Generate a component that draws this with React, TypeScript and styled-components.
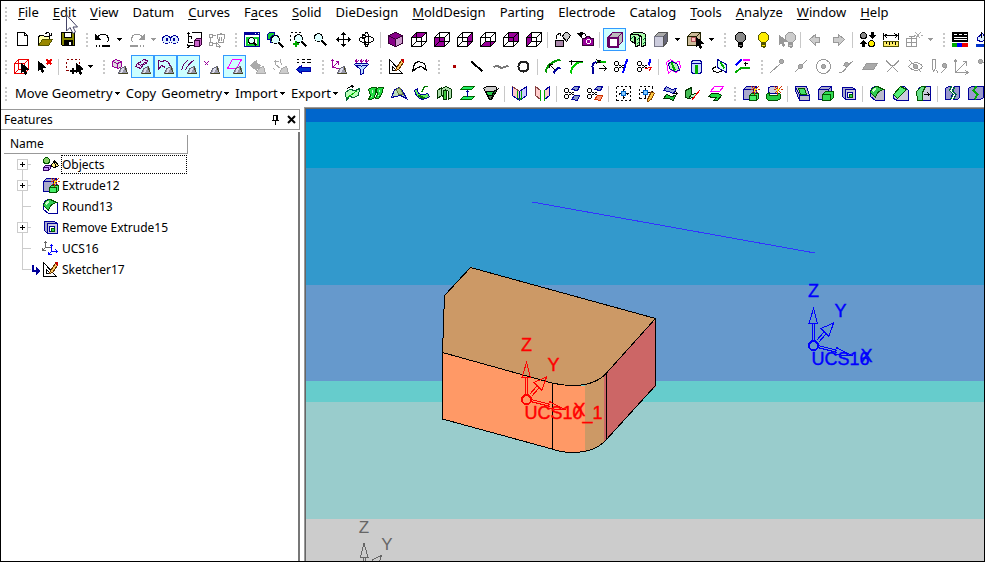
import React from 'react';
import styled, { createGlobalStyle } from 'styled-components';

const K = '#000';
const PU = '#909';
const GN = '#1c3';
const DG = '#063';
const NV = '#009';
const GY = '#999';
const BL = '#00f';
const RD = '#e00';
const MG = '#f0f';

/* [path, stroke, fill, stroke width] */
type Stroke = [string, string?, string?, number?];

const disc = (x: number, y: number, r: number) =>
  `M${x - r} ${y}a${r} ${r} 0 1 0 ${2 * r} 0a${r} ${r} 0 1 0 ${-2 * r} 0Z`;

const lens = (x: number, y: number): Stroke[] => [
  [disc(x, y, 4), K, '#dff'],
  [`M${x + 3} ${y + 3}l5 5`, K, 'none', 2],
];
const dome: Stroke[] = [
  ['M7 15Q8 9 14 8L16 15Z', '#667', '#99a'],
  ['M9 14Q9 10 13 9L11 14Z', 'none', '#dde'],
  ['M7 15H16M14 9L15 14', '#442'],
];
const greyDome: Stroke[] = [['M7 15Q8 9 14 8L16 15Z', '#aaa', '#ccc']];
const cursor = (x: number, y: number, c = K): Stroke => [
  `M${x} ${y}v9l2 -2l2 4l1 -1l-1 -4h3Z`,
  c,
  c,
];
const wire: Stroke[] = [
  ['M1 6H11V15H1ZM6 1H16V10H6ZM1 6L6 1M11 6L16 1M11 15L16 10M1 15L6 10', K],
];
const cubeFace = (d: string): Stroke[] => [[d, PU, PU], ...wire];
const bulb = (x: number, c: string, o: string): Stroke[] => [
  [`M${x} 1h4l3 3v4l-3 3h-4l-3 -3v-4Z`, o, c],
  [`M${x} 12h4v3h-4ZM${x} 13h4M${x + 1} 16h2`, o, c],
];
const scissors: Stroke[] = [
  [disc(3, 5, 2), K],
  [disc(3, 11, 2), K],
  ['M5 6L11 10M5 10L11 6', K, 'none', 1],
];
const block: Stroke[] = [
  ['M1 4L4 1H14V11L11 14H1Z', NV, '#aac'],
  ['M1 4H11V14M11 4L14 1', NV],
];
const spark: Stroke[] = [
  ['M9 1L16 8M16 1L9 8M12 0V3M12 6V9M8 4H10M15 4H17', '#c30'],
  ['M11 4H14M12 3V6', '#fe0', 'none', 1],
];
const arrows4: Stroke = ['M8 1V15M1 8H15', K];

const icons: Record<string, Stroke[]> = {
  new: [['M4 1H11L14 4V14H4ZM11 1V4H14', K, '#fff']],
  open: [
    ['M2 13V5L4 4H7L8 5H13V8', K, '#ffa'],
    ['M2 14L6 8H16L12 14Z', '#550', '#980'],
    ['M9 3L10 1H12L14 4M15 1V4H12', K],
  ],
  save: [
    ['M2 1H15V14H3L2 13Z', K, '#880'],
    ['M5 1H12V6H5Z', K, '#fff'],
    ['M5 9H13V14H5Z', K, K],
    ['M10 11H11V13H10Z', '#fff', '#fff'],
  ],
  undo: [
    ['M3 6C6 1 14 1 14 9L12 11', K],
    ['M1 3V8H6Z', K, K],
    ['M1 14H2M4 14H5M7 14H15', K, 'none', 2],
  ],
  redo: [
    ['M14 6C11 1 3 1 3 9L5 11', GY],
    ['M16 3V8H11Z', GY, GY],
    ['M1 14H9M11 14H12M14 14H15', GY, 'none', 2],
  ],
  glasses: [
    [disc(4, 8, 4), NV, '#def'],
    [disc(12, 8, 4), NV, '#def'],
    ['M4 7H5V9H4ZM11 7H12V9H11Z', NV, '#07c'],
  ],
  relate: [
    ['M6 1H16V10M3 5V11H7', K],
    ['M1 3L3 1L5 3M3 1V5H6M6 5V7', K],
    ['M2 13L4 15L2 16M1 14H8', K],
    ['M9 9L11 7H16V13L14 15H9Z', '#303', '#c6c'],
    ['M9 9H14V15', '#303'],
  ],
  clean: [
    ['M1 3H4V6H1ZM1 11H4V14H1ZM2 6V11M4 4H7M4 12H9M8 10V15H11M10 13L12 15L10 17', GY],
    ['M8 3H16M9 4L10 11H15L16 4M11 2H13M11 5V9M13 5V9', GY],
  ],
  fit: [
    ['M1 1H16V15H1Z', NV, '#fff'],
    ['M1 2H16', NV, 'none', 3],
    ['M11 2H12M14 2H15', '#fff'],
    ['M3 6H14V13H3Z', GN, 'none', 2],
    [disc(8, 9, 3), K, '#dff'],
    ['M10 11L13 14', K, 'none', 2],
  ],
  zoomPart: [
    ['M1 3L3 1H8V6L6 8H1Z', NV, GN],
    ['M4 6L6 4H11V9L9 11H4Z', NV, '#6d6'],
    ...lens(9, 8),
  ],
  zoomBox: [
    ['M1 1H3M5 1H7M9 1H11M1 3V5M1 7V9M11 3V4', K],
    ...lens(9, 7),
    ['M6 9V15M3 12H9', '#0a0', 'none', 2],
  ],
  zoom: lens(6, 6),
  pan: [arrows4, ['M6 3L8 1L10 3ZM6 13L8 15L10 13ZM3 6L1 8L3 10ZM13 6L15 8L13 10Z', K, K]],
  rotate: [
    ['M1 8C1 4 15 4 15 8C15 12 1 12 1 8ZM8 1C5 1 5 15 8 15C11 15 11 1 8 1Z', K],
    ['M4 3L8 5L4 7ZM10 12L7 10V14Z', K, '#fff'],
  ],
  cube: [
    ['M1 4L8 1L15 4V12L8 15L1 12Z', '#303', '#808'],
    ['M8 8L15 4V12L8 15Z', '#303', '#c9c'],
    ['M1 4L8 8V15', '#303'],
  ],
  vTop: cubeFace('M1 6L6 1H16L11 6Z'),
  vFront: cubeFace('M1 6H11V15H1Z'),
  vRight: cubeFace('M11 6L16 1V10L11 15Z'),
  vBottom: cubeFace('M1 15L6 10H16L11 15Z'),
  vBack: cubeFace('M6 1H16V10H6Z'),
  vLeft: cubeFace('M1 6L6 1V10L1 15Z'),
  swap: [
    ['M1 9H9V15H1Z', K, '#a8a'],
    ['M9 3L11 1H13L16 4L12 10L8 5Z', K, '#ccc'],
    ['M2 7V4L5 2M3 2H6V4', K],
  ],
  camera: [
    ['M5 7H8L9 5H12L13 7H16V14H5Z', '#303', PU],
    [disc(11, 10, 2), '#fff', PU],
    ['M2 3C6 0 9 3 8 5', K],
    ['M0 2L5 1L4 6Z', K, K],
  ],
  shaded: [
    ['M1 6L6 1H16V10L11 15H1Z', '#606', '#bbb', 1],
    ['M2 6H11V15H2Z', '#606', '#fff', 2],
    ['M11 6L16 1M6 1H16V10L11 15M2 6L6 1', '#606', 'none', 1],
  ],
  section: [
    ['M1 3L4 1H13L16 3V14L12 15V5L10 4V14L6 15V6L5 5V12L1 9Z', K, '#afa'],
    ['M1 3H8L12 5M6 1H13L16 3', K, '#ccc'],
    ['M7 9L10 6M7 13L10 10M13 9L16 6M13 13L16 10M1 8L4 5', DG],
  ],
  solid: [
    ['M2 5L6 1H15V10L11 15H2Z', '#555', '#aaa'],
    ['M2 5H11V15H2Z', '#778', '#ccd'],
    ['M11 5L15 1V10L11 15Z', '#555', '#667'],
  ],
  pickBody: [
    ['M1 5L5 1H14V10L10 14H1Z', '#220', '#cb9'],
    ['M1 5H10V14M10 5L14 1', '#220'],
    ['M5 10H9V6H5Z', '#a55', '#fbb'],
    cursor(10, 6),
  ],
  bulbOff: bulb(6, '#888', K),
  bulbOn: bulb(6, '#fe0', '#550'),
  bulbPick: [...bulb(10, '#ccc', GY), cursor(1, 4, GY)],
  prev: [['M2 8L8 3V6H12V11H8V14Z', '#999', '#ccc']],
  next: [['M14 8L8 3V6H3V11H8V14Z', '#999', '#ccc']],
  exchange: [
    [disc(4, 4, 3), K, '#888'],
    [disc(12, 12, 3), K, '#fe0'],
    ['M10 4H12V1H14V4H16L13 7Z', K, K],
    ['M1 12L4 9L7 12H5V15H3V12Z', K, K],
  ],
  measure: [
    ['M1 1V8M16 1V8M2 4H15M5 2L2 4L5 7M12 2L15 4L12 7', K],
    ['M1 10H16V15H1Z', '#550', '#fe6'],
    ['M4 10V12M7 10V13M10 10V12M13 10V13', K],
  ],
  align: [
    ['M1 7H11V15H1ZM1 11H11M6 4V15M3 5H9', GY],
    ['M10 1L15 7M15 1L10 7M8 4H10M15 4H17', '#aaa'],
  ],
  layers: [
    ['M1 1H16V10H1Z', K, K],
    ['M2 3H5M7 3H10M12 3H15M2 6H15M2 8H15', '#fff'],
    ['M1 12H5V15H1Z', '#0a0', '#0a0'],
    ['M6 12H10V15H6Z', BL, BL],
    ['M11 12H16V15H11Z', RD, RD],
  ],
  paint: [
    ['M3 6L8 2L12 8L7 10L3 9Z', NV, '#def'],
    ['M7 0V6', K],
    ['M1 14H16', '#03c', 'none', 3],
  ],

  pickCube: [
    ['M1 5H11V15H1ZM5 1H15V11H5ZM1 5L5 1M11 5L15 1M11 15L15 11M1 15L5 11', RD],
    cursor(8, 5),
  ],
  deselect: [cursor(2, 3), ['M10 1L15 6M15 1L10 6', RD, 'none', 2]],
  boxSelect: [
    ['M1 1H3M5 1H7M9 1H11M13 1H14M1 3V5M1 7V9M1 11V12H3M14 3V5', '#800', 'none', 1],
    ['M7 9V15M4 12H10', K, 'none', 2],
    cursor(11, 5),
  ],
  fBody: [['M1 3L4 1L10 3V8L7 10L1 8ZM1 3L6 5V10M6 5L10 3', PU, '#ddd'], ...dome],
  fFace: [['M1 8L3 5L7 3L9 1L13 2L12 5L9 6L6 10L4 9ZM3 5L6 7L12 3', '#606', '#edf'], ...dome],
  fEdge: [['M1 11V2L4 3L8 2L11 4L13 8M1 11L4 7L8 9', '#606'], ...dome],
  fCurve: [['M1 12C2 7 4 4 8 1M5 12C6 8 9 5 14 1', '#606'], ...dome],
  fPoint: [['M1 3L5 7M5 3L1 7', PU], ...dome],
  fPlane: [['M1 10L6 1H15L10 10Z', MG], ...dome],
  fOff: [['M1 7L7 2V5L11 7L9 10L7 9V12Z', '#aaa', '#aaa'], ...greyDome],
  fWire: [['M1 3H6M3 1V6L8 10M3 12L1 10M8 1L9 7', '#aaa'], ...greyDome],
  filterAll: [
    ['M1 1H3M6 1H9M11 1H15M1 4H3M6 4H9M11 4H15', K, 'none', 1],
    ['M1 11L6 7V9H15V13H6V15Z', '#00a', '#03c'],
  ],
  fUcs: [['M2 1V9L9 10M0 3L2 1L4 3M2 9L8 3M5 3H8V6', PU], ...dome],
  funnel: [
    ['M1 6C1 4 15 4 15 6L10 11V15L7 16V11Z', NV, '#bdf'],
    ['M1 6C3 8 13 8 15 6', NV],
    ['M3 0V4M8 0V4M13 0V4M2 2L3 4L5 2M7 2L8 4L10 2M12 2L13 4L15 2', PU],
  ],
  sketch: [
    ['M1 1V15H14ZM4 8V12H8Z', K],
    ['M8 9L13 2L15 4L10 11L7 12Z', '#630', '#fc6'],
    ['M13 1L15 1V4Z', '#c00', '#c00'],
  ],
  profile: [['M1 13L3 5L7 3L13 5L15 12L10 8L6 9Z', K]],
  point: [['M7 7H9V9H7Z', '#a00', '#a00']],
  line: [['M2 3L13 13', K, 'none', 2]],
  spline: [['M1 9C3 7 5 7 8 9C11 10 13 8 16 7', '#777', 'none', 2]],
  circle: [[disc(8, 8, 5), '#222', 'none', 2]],
  offset: [
    ['M1 14C2 7 7 3 16 1', '#090', 'none', 2],
    ['M9 15C10 12 12 10 16 9', NV, 'none', 2],
    ['M5 6L11 12M5 9V6H8', K],
  ],
  trimC: [
    ['M3 15C4 8 8 4 15 3', '#0c0', 'none', 2],
    ['M1 3H15M4 1V6', K],
  ],
  fillet: [
    ['M2 15V8C2 6 4 4 6 3', NV, 'none', 2],
    ['M6 3H15', '#0b0', 'none', 2],
    ['M6 1L11 5M11 1L6 5M8 10H16M13 7L16 10L13 13', K],
  ],
  cut: [...scissors, ['M9 14C12 12 10 6 14 1', BL, 'none', 2]],
  cutRed: [...scissors, ['M12 7L14 1', BL, 'none', 2], ['M9 10L15 9L12 13', RD]],
  project: [
    ['M1 4L5 1L9 4L14 3L15 9L11 14L6 12L3 15Z', MG],
    ['M3 5L7 3L12 6L14 12L9 13L4 10Z', NV, '#beb'],
    ['M6 4C8 7 7 10 10 12', '#0a0', 'none', 2],
  ],
  cylinder: [
    ['M3 4C3 1 13 1 13 4V13C13 16 3 16 3 13Z', NV, '#cdf'],
    ['M3 4C3 6 13 6 13 4', NV],
    ['M8 6V15', '#0a0', 'none', 3],
  ],
  wrap: [
    ['M6 1L15 6V14L6 9Z', NV, '#dfe'],
    ['M9 4L13 10', '#0a0', 'none', 2],
    ['M5 8L1 10C1 14 7 15 11 12', K],
  ],
  steps: [
    ['M1 7L7 1', BL, 'none', 2],
    ['M8 1H15', MG, 'none', 2],
    ['M1 14L7 9H15', '#0a0', 'none', 2],
    ['M11 3V7M9 5H13', K],
  ],
  sLine: [['M1 14L11 5', GY], [disc(12, 3, 2), GY, '#aaa']],
  sMid: [['M2 14L14 2', GY], [disc(8, 8, 2), GY, '#aaa']],
  sCenter: [[disc(8, 8, 7), GY], [disc(8, 8, 2), GY, '#aaa']],
  sTan: [['M1 14C8 15 7 5 15 3M5 7L12 5', GY], [disc(8, 6, 2), GY, '#aaa']],
  sPlane: [['M1 11L5 5H16L12 11Z', GY, '#aaa']],
  sCross: [['M2 2L14 14M14 2L2 14M2 3C8 9 8 9 14 3', GY]],
  sHidden: [['M1 8C5 3 12 3 15 8C12 13 5 13 1 8ZM2 2L14 14', GY], [disc(8, 8, 2), GY, '#aaa']],
  sPen: [['M2 1H5V10L3 13L2 10ZM6 12L8 15M10 15L16 9', GY], [disc(14, 7, 2), GY, '#aaa']],
  sAngle: [['M2 1V14H15M2 14L13 3M0 4L2 1L4 4M12 12L15 14L12 16M9 3H13V7', GY]],
  sEnd: [['M4 4H14V14', GY], [disc(4, 3, 2), GY, '#aaa']],

  ruled: [
    ['M1 7L5 4L11 5L15 3L14 10L9 12L5 11L2 15Z', '#063', '#bfb'],
    ['M3 12L13 5', '#0b0', 'none', 1],
    ['M3 3L6 1H9M7 0L9 1L7 3', K],
  ],
  drive: [
    ['M1 4L4 2H9L7 12L4 14H1L3 10ZM8 4L11 2H16L14 9L11 13H8L10 8Z', '#050', '#2d4'],
    ['M4 4H6L4 11ZM11 4L13 4L11 10Z', 'none', '#cfc'],
  ],
  blend: [
    ['M1 12L4 4L9 2L13 7L16 13L10 10L5 11Z', NV, '#bdb'],
    ['M6 4L9 2L13 9L8 9Z', '#674', '#ac8'],
  ],
  sweep: [
    ['M1 5L4 3C4 9 8 11 14 8L16 11C10 16 3 14 1 5Z', NV, '#6e6'],
    ['M5 10L11 13', '#070', 'none', 2],
    ['M8 7L11 1H14', '#070'],
  ],
  sheets: [
    ['M1 5L5 2V10L1 13ZM5 3L10 1L15 4V12L12 14V6L9 4V12L5 10', '#030', '#ada'],
    ['M7 5H10V14H7Z', '#030', '#4c4'],
  ],
  offsetS: [
    ['M1 4L4 1H15L12 4Z', '#060', '#2e6'],
    ['M1 14L4 11H15L12 14Z', '#060', '#2e6'],
    ['M8 5V11M6 7L8 5L10 7', NV],
  ],
  bowl: [
    ['M1 3L4 1H13L15 4L13 6H3Z', K, '#ccc'],
    ['M3 6H13L11 10H5Z', K, '#2c4'],
    ['M5 10H11L9 14H7Z', K, '#575'],
    ['M11 6L15 4L9 14Z', K, '#283'],
  ],
  mirrorA: [
    ['M1 1L8 6V15L1 10Z', '#844', '#fcc'],
    ['M15 1L8 6V15L15 10Z', NV, '#ccf'],
    ['M6 5V13L8 14L10 13V5', '#0a0', 'none', 1],
    ['M1 1V10L8 15', NV],
  ],
  mirrorB: [
    ['M1 1L6 5V14L1 10Z', '#844', '#fcc'],
    ['M15 1L10 5V14L15 10Z', NV, '#fcc'],
    ['M6 4V15M10 4V15', '#0a0', 'none', 1],
  ],
  cutS: [...scissors, ['M8 4L11 1H16L14 5ZM8 14L11 10H16L14 15Z', NV, '#89c']],
  cutSR: [...scissors, ['M8 4L11 1H16L14 5Z', NV, '#89c'], ['M8 14L11 10H16L14 15Z', '#c30', '#f97']],
  extend: [
    ['M1 1H3M5 1H7M9 1H11M13 1H15V3M15 5V7M15 9V11M15 13V15H13M11 15H9M7 15H5M3 15H1V13M1 11V9M1 7V5M1 3V1', K],
    ['M8 3V13M3 8H13M7 4H9M7 12H9M4 7V9M12 7V9', K],
    ['M6 6H10V10H6Z', '#06c', '#8cf'],
  ],
  extendE: [
    ['M1 1H3M5 1H7M9 1H11M13 1H14V3M14 5V7M1 13V11M1 9V7M1 5V3M1 13H3M5 13H7', K],
    ['M7 2V12M2 7H12', K],
    ['M5 5H9V9H5Z', '#06c', '#8cf'],
    ['M9 14L13 6L16 8L12 15L9 16Z', '#840', '#fc4'],
  ],
  flip: [
    ['M2 5L5 1L10 4L15 3L12 8L7 6Z', NV, '#9ad'],
    ['M2 13L5 9L10 11L14 10L12 15L7 13Z', '#030', '#2c4'],
    ['M11 8H16M14 6L16 8L14 10', K],
  ],
  hinge: [
    ['M1 5L7 2V10L4 13L1 12Z', '#030', '#4b5'],
    ['M4 13L7 9L13 8L9 12Z', '#030', '#bfc'],
    ['M7 15L15 5', '#e00', 'none', 1],
  ],
  replace: [
    ['M3 6L7 1H16L12 6Z', MG, '#fff'],
    ['M1 11L4 8H11L14 10L10 15H6L9 12L5 12Z', '#030', '#2d4'],
  ],
  extrude: [...block, ['M7 10L9 8H16V13L14 15H7Z', '#050', '#4e6'], ['M7 10H14V15', '#050'], ...spark],
  revolve: [
    ['M3 2L6 1H12V8H3Z', NV, '#ccd'],
    ['M1 9L4 7V10H12V7L15 9V13L12 15H3L1 13Z', '#050', '#2c4'],
    ...spark,
  ],
  shellOp: [
    ['M1 1H12L15 10V15H5L1 5Z', NV, '#bbc'],
    ['M4 3H10L12 9H6Z', '#050', '#4d6'],
    ['M5 10H15M1 1L5 10V15', NV],
  ],
  addExt: [...block, ['M5 9L8 6H16V12L13 15H5Z', '#050', '#3d5'], ['M5 9H13V15', '#050']],
  remExt: [
    ['M2 2H12L15 4V14H5L2 11Z', NV, '#aac'],
    ['M5 4H15V14H5Z', NV, '#ccd'],
    ['M7 7H12V12H7Z', NV, '#fff'],
    ['M9 9H12V12H9Z', '#050', '#3d5'],
  ],
  round: [
    ['M1 7C1 3 4 1 8 1L15 5V15H6L1 11Z', NV, '#bbc'],
    ['M1 7C2 3 5 1 8 1L14 4C9 5 7 7 6 12Z', '#050', '#3c5'],
    ['M3 6L6 3', '#cfc', 'none', 2],
  ],
  roundW: [
    ['M1 7C1 3 4 1 8 1L15 5V15H6L1 11Z', NV, '#fff'],
    ['M1 7C2 3 5 1 8 1L14 4C9 5 7 7 6 12Z', '#050', '#3c5'],
    ['M3 6L6 3', '#cfc', 'none', 2],
  ],
  chamfer: [
    ['M1 9L8 1H12L16 5V15H5L1 13Z', NV, '#ccd'],
    ['M1 9L8 1L14 4L5 13Z', '#050', '#5e7'],
  ],
  draft: [
    ['M3 3L6 1H15V15H4Z', NV, '#ccd'],
    ['M1 6L6 1H10L7 7V15H2Z', '#050', '#6d8'],
    ['M8 9H14M12 7L14 9L12 11', K],
  ],
  splitA: [
    ['M1 3L4 1H7L5 5L8 8L6 14H1Z', NV, '#99c'],
    ['M10 1H15V12L13 14H9L11 9L8 5Z', NV, '#99c'],
    ['M7 1L5 5L9 9L6 14M10 2L8 6L12 9L9 14', '#073'],
  ],
  splitB: [
    ['M1 3L4 1H16V12L13 14H1Z', NV, '#99c'],
    ['M9 1L6 5L10 9L7 14', '#0a0', 'none', 2],
  ],

  objects: [
    [disc(4, 4, 3), '#050', '#8c6'],
    ['M8 10L12 4L16 9L13 11Z', K, '#fe8'],
    ['M12 4L13 11', K],
    ['M1 11L3 9H8V12L6 14H1Z', '#306', '#c9f'],
    ['M1 11H6V14', '#306'],
  ],
  ucs: [
    ['M3 1V7H8M1 3L3 1L5 3M3 7L0 10M0 7V10H3', '#666'],
    ['M9 4V11H15M7 6L9 4L11 6M13 9L15 11L13 13M9 11L6 14M6 11V14H9', BL],
  ],
};

const Glyph = ({ name }: { name: string }) => (
  <svg width="18" height="18" viewBox="0 0 18 18" shapeRendering="crispEdges" aria-hidden="true">
    <g transform="translate(.5 .5)">
      {icons[name].map(([d, stroke = K, fill = 'none', w = 1], i) => (
        <path key={i} d={d} stroke={stroke} fill={fill} strokeWidth={w} />
      ))}
    </g>
  </svg>
);

const Global = createGlobalStyle`
  * { box-sizing: border-box; }
  html, body, #root { height: 100%; margin: 0; }
  body { font: 13px/18px "Noto Sans", "Open Sans", sans-serif; color: #000; overflow: hidden; }
  button { font: inherit; color: inherit; background: none; border: 0; padding: 0; margin: 0; }
  svg { display: block; flex: none; }
`;

const Frame = styled.div`
  position: relative;
  height: 100%;
  display: flex;
  flex-direction: column;
  border: 1px solid #000;
  background: #fff;
  overflow: hidden;
`;

const Bar = styled.div`
  display: flex;
  align-items: center;
  flex: none;
  height: 27px;
  overflow: hidden;
  white-space: nowrap;
`;

const MenuBar = styled(Bar)`
  height: 25px;
`;

const MenuList = styled.nav`
  display: flex;
  gap: 14px;
  padding: 0 0 3px 8px;
  u { text-underline-offset: 2px; }
`;

const Grip = styled.span`
  flex: none;
  width: 9px;
  height: 14px;
  padding-left: 4px;
  margin-left: 3px;
  background: repeating-linear-gradient(#c8c8c8 0 2px, #fff 2px 4px) content-box;
  border-right: 3px solid #fff;
  &:first-child { margin-left: 0; }
`;

const Rule = styled.span`
  flex: none;
  width: 1px;
  height: 16px;
  margin: 0 3px 0 2px;
  background: #c8c8c8;
`;

const ToolButton = styled.button<{ $on?: boolean }>`
  flex: none;
  display: grid;
  place-items: center;
  width: 23px;
  height: 23px;
  border: 1px solid ${(p) => (p.$on ? '#39f' : 'transparent')};
  background: ${(p) => (p.$on ? '#cff' : 'none')};
`;

const Drop = styled.button`
  flex: none;
  display: grid;
  place-items: center;
  width: 11px;
  height: 23px;
`;

const CommandGroup = styled.div`
  flex: none;
  display: flex;
  justify-content: space-between;
  width: 331px;
  padding: 0 2px 2px 5px;
`;

const Command = styled.button`
  display: flex;
  align-items: center;
  gap: 1px;
  svg { margin-top: 2px; }
`;

const Work = styled.div`
  flex: 1;
  min-height: 0;
  display: flex;
  gap: 4px;
`;

const Side = styled.aside`
  flex: none;
  width: 299px;
  padding-top: 2px;
  display: flex;
  flex-direction: column;
  font-size: 12px;
`;

const PanelTitle = styled.header`
  flex: none;
  display: flex;
  align-items: center;
  gap: 4px;
  height: 21px;
  padding: 0 2px 0 3px;
  border: 1px solid #999;
  border-left: 0;
  h2 { flex: 1; margin: 0; font: inherit; }
`;

const PanelButton = styled.button`
  display: grid;
  place-items: center;
  width: 12px;
  height: 14px;
`;

const PanelBody = styled.div`
  flex: 1;
  margin-top: 2px;
  padding: 3px 0 0 3px;
  border-right: 2px solid #777;
`;

const ColumnHead = styled.div`
  width: 184px;
  height: 19px;
  padding-left: 6px;
  border: solid #999;
  border-width: 0 1px 1px 0;
`;

const Tree = styled.ul`
  list-style: none;
  margin: 0;
  padding: 0 0 0 12px;
`;

const Node = styled.li`
  display: flex;
  align-items: center;
  height: 21px;
`;

const Label = styled.span<{ $focus?: boolean }>`
  width: 126px;
  height: 19px;
  line-height: 17px;
  margin-left: 1px;
  white-space: nowrap;
  border: 1px dotted ${(p) => (p.$focus ? '#000' : 'transparent')};
`;

const Viewport = styled.main`
  flex: 1;
  min-width: 0;
  border: solid #999;
  border-width: 1px 0 0 1px;
`;

const Canvas = styled.div`
  height: 100%;
  border: solid #666;
  border-width: 1px 0 0 1px;
  background: linear-gradient(
    #06c 0 13px, #09c 13px 59px, #39c 59px 176px, #69c 176px 272px,
    #6cc 272px 293px, #9cc 293px 410px, #ccc 410px
  );
`;

const Pointer = styled.svg`
  position: absolute;
  left: 64px;
  top: 13px;
`;

const Arrow = ({ dim }: { dim?: boolean }) => (
  <svg width="7" height="5" viewBox="0 0 7 5" shapeRendering="crispEdges" aria-hidden="true">
    <path d="M1 1H6L3.5 4Z" fill={dim ? GY : K} />
  </svg>
);

/* "|" rule, ":" grip, "v" drop arrow, "w" dimmed drop arrow, "*" prefix marks a pressed tool */
const ToolItems = ({ items }: { items: string[] }) => (
  <>
    {items.map((it, i) => {
      if (it === '|') return <Rule key={i} />;
      if (it === ':') return <Grip key={i} />;
      if (it === 'v' || it === 'w')
        return (
          <Drop key={i} type="button" aria-label={`${items[i - 1]} options`}>
            <Arrow dim={it === 'w'} />
          </Drop>
        );
      const on = it.startsWith('*');
      const name = on ? it.slice(1) : it;
      return (
        <ToolButton key={i} type="button" $on={on} aria-pressed={on} aria-label={name}>
          <Glyph name={name} />
        </ToolButton>
      );
    })}
  </>
);

const row1 = ': new open save : undo v redo w glasses relate clean : fit zoomPart zoomBox zoom pan rotate | cube vTop vFront vRight vBottom vBack vLeft | swap camera | *shaded section solid v pickBody v : bulbOff bulbOn bulbPick | prev next | exchange measure align w : layers paint'.split(' ');
const row2 = ': pickCube deselect | boxSelect v : fBody *fFace *fEdge *fCurve fPoint *fPlane fOff fWire filterAll : fUcs funnel : sketch profile : point line spline circle | offset trimC fillet cut cutRed | project cylinder wrap steps : sLine sMid sCenter sTan sPlane sCross sHidden sPen sAngle sEnd'.split(' ');
const row3 = 'ruled drive blend sweep sheets offsetS bowl | mirrorA mirrorB | cutS cutSR | extend extendE flip hinge replace : extrude revolve | shellOp addExt remExt | round chamfer draft | splitA splitB'.split(' ');

const menus: [string, number][] = [
  ['File', 0], ['Edit', 0], ['View', 0], ['Datum', -1], ['Curves', 0], ['Faces', 1],
  ['Solid', 0], ['DieDesign', -1], ['MoldDesign', 0], ['Parting', -1], ['Electrode', -1],
  ['Catalog', -1], ['Tools', 0], ['Analyze', 0], ['Window', 0], ['Help', 0],
];

const commands: [string, boolean][] = [
  ['Move Geometry', true], ['Copy', false], ['Geometry', true], ['Import', true], ['Export', true],
];

type Feature = { name: string; icon: string; open?: boolean; current?: boolean };
const features: Feature[] = [
  { name: 'Objects', icon: 'objects', open: true },
  { name: 'Extrude12', icon: 'extrude', open: true },
  { name: 'Round13', icon: 'roundW' },
  { name: 'Remove Extrude15', icon: 'remExt', open: true },
  { name: 'UCS16', icon: 'ucs' },
  { name: 'Sketcher17', icon: 'sketch', current: true },
];

const Branch = ({ f, first, last }: { f: Feature; first: boolean; last: boolean }) => (
  <svg width="26" height="21" viewBox="0 0 26 21" shapeRendering="crispEdges" aria-hidden="true">
    <path d={`M6.5 ${first ? 10 : 0}V${last ? 11 : 21}M6.5 10.5H15`} stroke="#ccc" fill="none" />
    {f.open && (
      <>
        <rect x="1.5" y="5.5" width="10" height="10" fill="#fff" stroke="#ccc" />
        <path d="M4 10.5H9M6.5 8V13" stroke="#000" />
      </>
    )}
    {f.current && (
      <>
        <path d="M17 6V12H20" stroke="#009" fill="none" strokeWidth="2" />
        <path d="M20 8L24 12L20 16Z" fill="#009" />
      </>
    )}
  </svg>
);

const Triad = ({ x, y, color, label }: { x: number; y: number; color: string; label: string }) => (
  <g transform={`translate(${x} ${y})`} stroke={color} fill="none">
    <circle r="4.5" strokeWidth="2" />
    <path d="M-1 -5V-22M1 -5V-22M-4.5 -22H4L0 -37Z" />
    <path d="M3 -5L11 -14M5 -3L13 -12M7.500 -17L15.500 -9L20 -22.500Z" />
    <path d="M5 0L24 5M4 2L24 7M23 2L39 10.500L21 9Z" />
    <g fill={color} strokeWidth="0.4" fontFamily='"Liberation Sans", sans-serif' fontSize="18">
      <text x="0" y="-49" textAnchor="middle">Z</text>
      <text x="27" y="-29" textAnchor="middle">Y</text>
      <text x="53" y="16" textAnchor="middle">X</text>
      <text x="-2" y="19">{label}</text>
    </g>
  </g>
);

const Scene = () => (
  <svg
    width="100%"
    height="100%"
    viewBox="306 109 678 452"
    preserveAspectRatio="xMinYMin slice"
    shapeRendering="crispEdges"
    role="img"
    aria-label="Model view"
  >
    <path d="M532 202L815 253" stroke="#33f" />
    <path d="M471 267L656 319L606 373C598 382 586 386 573 386C563 386 558 384 552 383L442.500 353L444.500 295Z" fill="#c96" />
    <path d="M442.500 353L552 383C558 384 563 386 573 386H585V452H572C563 452 558 451 552 449L442.500 419Z" fill="#f96" />
    <path d="M585 384C592 383 599 380 604 375V442C598 448 592 450 585 452Z" fill="#c96" />
    <path d="M604 375L606 373L656 319V386L606 440L604 442Z" fill="#c66" />
    <path
      d="M470.500 267.500L655.500 318.500V385.500L606 440C598 449 586 452.500 572 452.500C563 452.500 558 451 552 449L442.500 419V353L444.500 295.500ZM442.500 352.500L552 383C558 384.500 563 385.500 573 385.500C586 385.500 598 382 606 373.500L655.500 318.500M552.500 383V449"
      fill="none"
      stroke="#000"
    />
    <path d="M606.500 373V440" stroke="#000" />
    <Triad x={526.5} y={399.5} color="#f00" label="UCS10_1" />
    <Triad x={813.5} y={345.5} color="#00f" label="UCS16" />
    <g stroke="#666" fill="none">
      <path d="M363 563V557M365.500 563V557M360.500 557.500L364 543L368 557.500Z" />
      <path d="M372 563V560L381.500 555.500L379 563" />
      <g fill="#666" stroke="none" fontFamily='"Liberation Sans", sans-serif' fontSize="17">
        <text x="364" y="533" textAnchor="middle">Z</text>
        <text x="387" y="550" textAnchor="middle">Y</text>
      </g>
    </g>
  </svg>
);

export default function App() {
  return (
    <Frame>
      <Global />
      <MenuBar>
        <Grip />
        <MenuList>
          {menus.map(([text, key]) => (
            <button type="button" key={text}>
              {key < 0 ? text : <>{text.slice(0, key)}<u>{text[key]}</u>{text.slice(key + 1)}</>}
            </button>
          ))}
        </MenuList>
      </MenuBar>
      <Bar><ToolItems items={row1} /></Bar>
      <Bar><ToolItems items={row2} /></Bar>
      <Bar>
        <Grip />
        <CommandGroup>
          {commands.map(([text, drop]) => (
            <Command key={text} type="button">
              {text}
              {drop && <Arrow />}
            </Command>
          ))}
        </CommandGroup>
        <ToolItems items={row3} />
      </Bar>
      <Work>
        <Side>
          <PanelTitle>
            <h2>Features</h2>
            <PanelButton type="button" aria-label="Pin">
              <svg width="9" height="10" viewBox="0 0 9 10" shapeRendering="crispEdges">
                <path d="M2.500 5V.5H6M1 5.500H8M4.500 6V10" stroke="#000" fill="none" />
                <path d="M6 0V5" stroke="#000" strokeWidth="2" />
              </svg>
            </PanelButton>
            <PanelButton type="button" aria-label="Close">
              <svg width="9" height="9" viewBox="0 0 9 9">
                <path d="M1 1L8 8M8 1L1 8" stroke="#000" strokeWidth="2" />
              </svg>
            </PanelButton>
          </PanelTitle>
          <PanelBody>
            <ColumnHead>Name</ColumnHead>
            <Tree>
              {features.map((f, i) => (
                <Node key={f.name}>
                  <Branch f={f} first={i === 0} last={i === features.length - 1} />
                  <Glyph name={f.icon} />
                  <Label $focus={i === 0}>{f.name}</Label>
                </Node>
              ))}
            </Tree>
          </PanelBody>
        </Side>
        <Viewport>
          <Canvas>
            <Scene />
          </Canvas>
        </Viewport>
      </Work>
      <Pointer width="14" height="21" viewBox="0 0 14 21" aria-hidden="true">
        <path d="M1.500 1V17L5 13.500L8 19.500L10.500 18L8 13H12.500Z" fill="#fff" stroke="#446" />
      </Pointer>
    </Frame>
  );
}
